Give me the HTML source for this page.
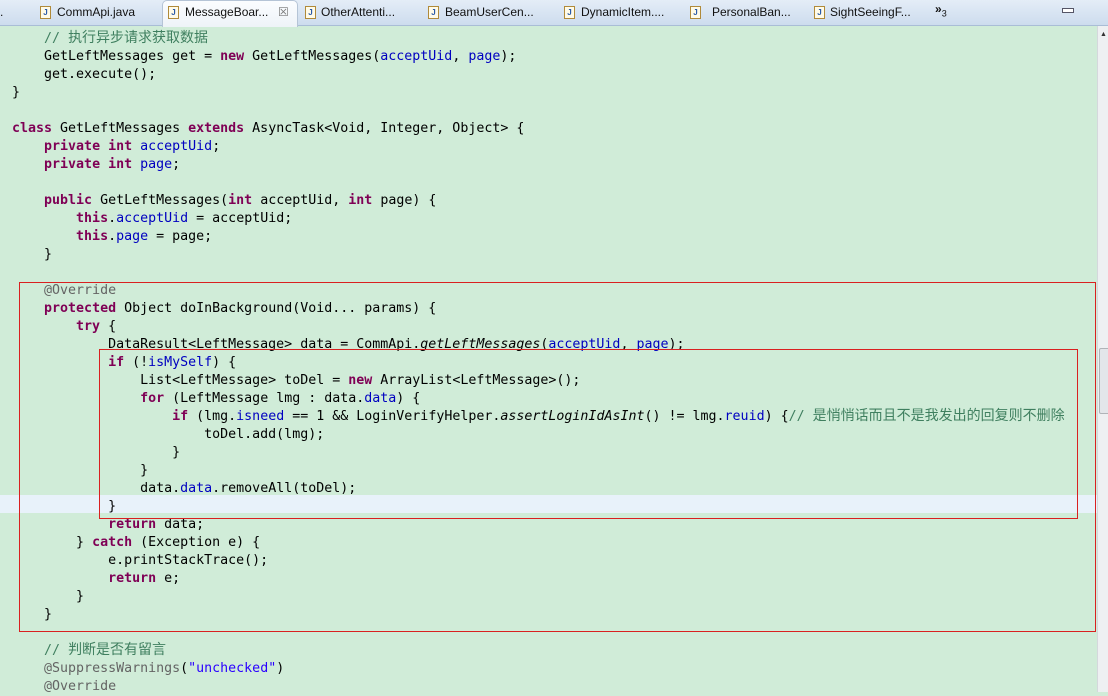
<!DOCTYPE html>
<html><head><meta charset="utf-8">
<style>
html,body{margin:0;padding:0;width:1108px;height:692px;overflow:hidden;background:#d0ecd8;}
#tabs{position:absolute;left:0;top:0;width:1108px;height:25px;background:linear-gradient(#e4edf7,#cddcee);border-bottom:1px solid #a9bdd6;font:12px "Liberation Sans",sans-serif;color:#111;}
.t{position:absolute;top:5px;white-space:nowrap;}
.ic{position:absolute;top:6px;width:9px;height:11px;border:1px solid #b08a3a;background:#fffbe8;font:bold 8px "Liberation Sans",sans-serif;color:#2a5aa8;text-align:center;line-height:11px;}
#act{position:absolute;left:162px;top:0;width:134px;height:26px;background:linear-gradient(#fbfdff,#eef3f8);border:1px solid #b5c4d6;border-bottom:none;border-radius:5px 5px 0 0;}
pre{position:absolute;left:12px;top:30px;margin:0;font:13.3px/18px "DejaVu Sans Mono","Noto Sans CJK SC",monospace;color:#000;}
.k{color:#7f0055;font-weight:bold}.f{color:#0000c0}.c{color:#3f7f5f}.s{color:#2a00ff}.a{color:#646464}.i{font-style:italic}
.z{font-size:14px;font-family:"Noto Sans CJK SC",sans-serif;line-height:0}
#hl{position:absolute;left:0;top:495px;width:1097px;height:18px;background:#e8f2fa;}
#sb{position:absolute;left:1097px;top:26px;width:11px;height:666px;background:#eef0f2;border-left:1px solid #d4d8dc;}
#th{position:absolute;left:1099px;top:348px;width:9px;height:64px;background:#e3e6ea;border:1px solid #b0b4b8;border-radius:2px;}
.box{position:absolute;border:1px solid #d92020;}
</style></head><body>
<div id="tabs">
<span class="t" style="left:0">.</span>
<div class="ic" style="left:40px">J</div><span class="t" style="left:57px">CommApi.java</span>
<div id="act"></div>
<div class="ic" style="left:168px">J</div><span class="t" style="left:185px">MessageBoar...</span><span class="t" style="left:278px;color:#777">☒</span>
<div class="ic" style="left:305px">J</div><span class="t" style="left:321px">OtherAttenti...</span>
<div class="ic" style="left:428px">J</div><span class="t" style="left:445px">BeamUserCen...</span>
<div class="ic" style="left:564px">J</div><span class="t" style="left:581px">DynamicItem....</span>
<div class="ic" style="left:690px">J</div><span class="t" style="left:712px">PersonalBan...</span>
<div class="ic" style="left:814px">J</div><span class="t" style="left:830px">SightSeeingF...</span>
<span class="t" style="left:935px;top:2px;font-weight:bold">»<sub style="font-size:9px;font-weight:normal">3</sub></span>
<div style="position:absolute;left:1062px;top:8px;width:10px;height:3px;border:1px solid #556;background:#fff"></div>
</div>
<div id="hl"></div>
<div id="sb"><div style="position:absolute;left:2px;top:4px;font-size:7px;color:#333">▲</div></div>
<div id="th"></div>
<pre>    <span class="c">// <span class="z">执行异步请求获取数据</span></span>
    GetLeftMessages get = <span class="k">new</span> GetLeftMessages(<span class="f">acceptUid</span>, <span class="f">page</span>);
    get.execute();
}

<span class="k">class</span> GetLeftMessages <span class="k">extends</span> AsyncTask&lt;Void, Integer, Object&gt; {
    <span class="k">private</span> <span class="k">int</span> <span class="f">acceptUid</span>;
    <span class="k">private</span> <span class="k">int</span> <span class="f">page</span>;

    <span class="k">public</span> GetLeftMessages(<span class="k">int</span> acceptUid, <span class="k">int</span> page) {
        <span class="k">this</span>.<span class="f">acceptUid</span> = acceptUid;
        <span class="k">this</span>.<span class="f">page</span> = page;
    }

    <span class="a">@Override</span>
    <span class="k">protected</span> Object doInBackground(Void... params) {
        <span class="k">try</span> {
            DataResult&lt;LeftMessage&gt; data = CommApi.<span class="i">getLeftMessages</span>(<span class="f">acceptUid</span>, <span class="f">page</span>);
            <span class="k">if</span> (!<span class="f">isMySelf</span>) {
                List&lt;LeftMessage&gt; toDel = <span class="k">new</span> ArrayList&lt;LeftMessage&gt;();
                <span class="k">for</span> (LeftMessage lmg : data.<span class="f">data</span>) {
                    <span class="k">if</span> (lmg.<span class="f">isneed</span> == 1 &amp;&amp; LoginVerifyHelper.<span class="i">assertLoginIdAsInt</span>() != lmg.<span class="f">reuid</span>) {<span class="c">// <span class="z">是悄悄话而且不是我发出的回复则不删除</span></span>
                        toDel.add(lmg);
                    }
                }
                data.<span class="f">data</span>.removeAll(toDel);
            }
            <span class="k">return</span> data;
        } <span class="k">catch</span> (Exception e) {
            e.printStackTrace();
            <span class="k">return</span> e;
        }
    }

    <span class="c">// <span class="z">判断是否有留言</span></span>
    <span class="a">@SuppressWarnings</span>(<span class="s">"unchecked"</span>)
    <span class="a">@Override</span>
</pre>
<div class="box" style="left:19px;top:282px;width:1075px;height:348px"></div>
<div class="box" style="left:99px;top:349px;width:977px;height:168px"></div>
</body></html>
